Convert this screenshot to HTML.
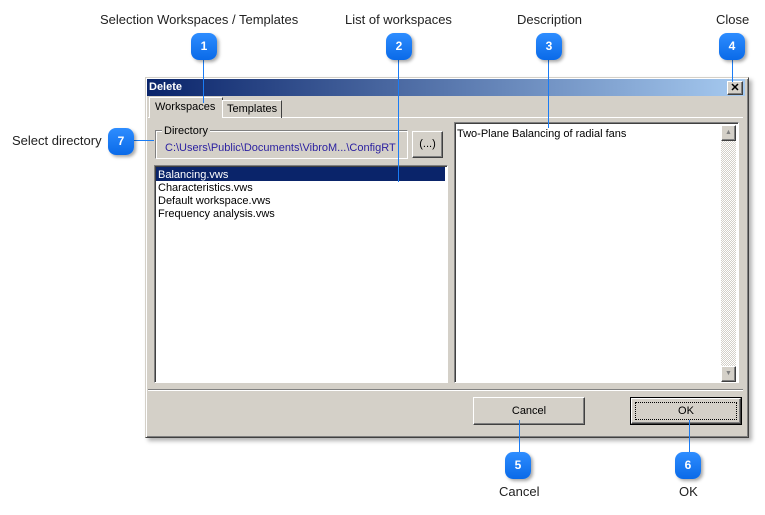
<!DOCTYPE html><html><head><style>
body{margin:0;width:765px;height:515px;background:#fff;position:relative;font-family:"Liberation Sans",sans-serif;font-size:11px;overflow:hidden}
.a{position:absolute}
.lbl{position:absolute;font-size:13px;color:#222;white-space:nowrap}
.b{position:absolute;width:26px;height:27px;border-radius:8px;background:linear-gradient(#2e8dff,#0a6ae8);color:#fff;font-weight:bold;font-size:12px;text-align:center;line-height:27px;box-shadow:2px 2px 3px rgba(0,0,0,.35)}
.ln{position:absolute;background:#1a7cf5}
.btn{position:absolute;background:#d4d0c8;border:1px solid;border-color:#fff #404040 #404040 #fff;box-shadow:inset -1px -1px #808080;text-align:center;font-size:11px;color:#000}
.sunk{position:absolute;background:#fff;border:1px solid;border-color:#808080 #fff #fff #808080;box-shadow:inset 1px 1px #404040}
</style></head><body>
<div class="a" style="left:145px;top:77px;width:602px;height:359px;background:#d4d0c8;border:1px solid;border-color:#d4d0c8 #404040 #404040 #d4d0c8;box-shadow:inset 1px 1px #fff,inset -1px -1px #808080,3px 3px 4px rgba(0,0,0,.3)"></div>
<div class="a" style="left:147px;top:79px;width:598px;height:17px;background:linear-gradient(90deg,#0a246a,#a6caf0)"></div>
<div class="a" style="left:149px;top:81px;color:#fff;font-weight:bold;font-size:11px">Delete</div>
<div class="btn" style="left:727px;top:81px;width:14px;height:12px;line-height:12px;font-weight:bold;font-size:11px">✕</div>
<div class="a" style="left:148px;top:117px;width:595px;height:1px;background:#fff"></div>
<div class="a" style="left:149px;top:97px;width:72px;height:20px;background:#d4d0c8;border:1px solid;border-color:#fff #404040 transparent #fff;border-bottom:none"></div>
<div class="a" style="left:155px;top:101px;font-size:11px">Workspaces</div>
<div class="a" style="left:222px;top:100px;width:58px;height:17px;border:1px solid;border-color:#fff #404040 transparent #fff;border-bottom:none"></div>
<div class="a" style="left:227px;top:103px;font-size:11px">Templates</div>
<div class="a" style="left:155px;top:130px;width:251px;height:27px;border:1px solid;border-color:#808080 #fff #fff #808080;box-shadow:1px 1px #fff inset"></div>
<div class="a" style="left:162px;top:125px;background:#d4d0c8;padding:0 2px;font-size:11px">Directory</div>
<div class="a" style="left:165px;top:142px;color:#2a1fa0;font-size:11px">C:\Users\Public\Documents\VibroM...\ConfigRT</div>
<div class="btn" style="left:412px;top:131px;width:29px;height:25px;line-height:25px">(...)</div>
<div class="sunk" style="left:154px;top:165px;width:292px;height:216px"></div>
<div class="a" style="left:156px;top:167px;width:289px;height:14px;background:#0a246a"></div>
<div class="a" style="left:158px;top:169px;color:#fff;line-height:13px">Balancing.vws</div>
<div class="a" style="left:158px;top:182px;line-height:13px">Characteristics.vws<br>Default workspace.vws<br>Frequency analysis.vws</div>
<div class="sunk" style="left:454px;top:122px;width:283px;height:259px"></div>
<div class="a" style="left:457px;top:128px">Two-Plane Balancing of radial fans</div>
<div class="a" style="left:721px;top:125px;width:15px;height:255px;background:repeating-conic-gradient(#d4d0c8 0 25%,#fff 0 50%) 0 0/2px 2px"></div>
<div class="btn" style="left:721px;top:125px;width:13px;height:14px;line-height:14px;font-size:7px;color:#808080">▲</div>
<div class="btn" style="left:721px;top:366px;width:13px;height:14px;line-height:14px;font-size:7px;color:#808080">▼</div>
<div class="a" style="left:148px;top:389px;width:595px;height:1px;background:#808080;border-bottom:1px solid #fff"></div>
<div class="btn" style="left:473px;top:397px;width:110px;height:26px;line-height:26px">Cancel</div>
<div class="a" style="left:630px;top:397px;width:110px;height:26px;border:1px solid #000"></div>
<div class="btn" style="left:631px;top:398px;width:108px;height:24px;line-height:24px"><div style="position:absolute;left:3px;top:3px;right:3px;bottom:3px;border:1px dotted #000"></div>OK</div>
<div class="ln" style="left:203px;top:58px;width:1px;height:45px"></div>
<div class="ln" style="left:398px;top:58px;width:1px;height:124px"></div>
<div class="ln" style="left:548px;top:58px;width:1px;height:70px"></div>
<div class="ln" style="left:732px;top:58px;width:1px;height:24px"></div>
<div class="ln" style="left:134px;top:140px;width:20px;height:1px"></div>
<div class="ln" style="left:519px;top:420px;width:1px;height:35px"></div>
<div class="ln" style="left:689px;top:420px;width:1px;height:35px"></div>
<div class="b" style="left:191px;top:33px">1</div>
<div class="b" style="left:386px;top:33px">2</div>
<div class="b" style="left:536px;top:33px">3</div>
<div class="b" style="left:719px;top:33px">4</div>
<div class="b" style="left:108px;top:128px">7</div>
<div class="b" style="left:505px;top:452px">5</div>
<div class="b" style="left:675px;top:452px">6</div>
<div class="lbl" style="left:100px;top:12px">Selection Workspaces / Templates</div>
<div class="lbl" style="left:345px;top:12px">List of workspaces</div>
<div class="lbl" style="left:517px;top:12px">Description</div>
<div class="lbl" style="left:716px;top:12px">Close</div>
<div class="lbl" style="left:12px;top:133px">Select directory</div>
<div class="lbl" style="left:499px;top:484px">Cancel</div>
<div class="lbl" style="left:679px;top:484px">OK</div>
</body></html>
